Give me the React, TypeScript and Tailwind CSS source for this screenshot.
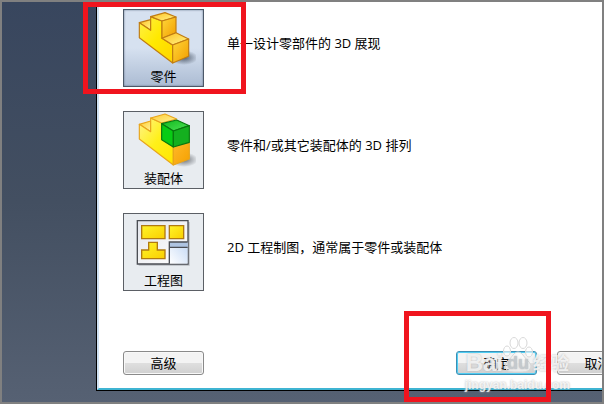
import type { ReactNode } from "react";
import clsx from "clsx";

function PartIcon() {
  return (
    <svg viewBox="156 33 192 168" className="h-14 w-16" aria-hidden="true">
      <defs>
        <linearGradient id="partFront" x1="0" y1="0" x2="1" y2="1">
          <stop offset="0" stopColor="#fff04a" />
          <stop offset="0.5" stopColor="#ffe900" />
          <stop offset="1" stopColor="#ffd400" />
        </linearGradient>
        <linearGradient id="partTop" x1="0" y1="0" x2="1" y2="1">
          <stop offset="0" stopColor="#ffbf1c" />
          <stop offset="1" stopColor="#fff58c" />
        </linearGradient>
        <linearGradient id="partSide" x1="0" y1="0" x2="1" y2="1">
          <stop offset="0" stopColor="#ffd83a" />
          <stop offset="1" stopColor="#f29d00" />
        </linearGradient>
        <radialGradient id="partShadow">
          <stop offset="0" stopColor="#3f4a5a" stopOpacity="0.85" />
          <stop offset="1" stopColor="#3f4a5a" stopOpacity="0" />
        </radialGradient>
      </defs>
      <ellipse cx="312" cy="176" rx="42" ry="22" fill="url(#partShadow)" />
      <g stroke="#c07c12" strokeWidth="3.5" strokeLinejoin="round">
        <path d="M178 71 212 62V94Z" fill="url(#partTop)" />
        <path
          d="M178 71 212 94V53L246 66V118L278 138V192L178 116Z"
          fill="url(#partFront)"
        />
        <path d="M212 53 255 41 288 54 246 66Z" fill="url(#partTop)" />
        <path d="M246 66 288 54V101L246 118Z" fill="url(#partSide)" />
        <path d="M246 118 288 101 326 120 278 138Z" fill="url(#partTop)" />
        <path d="M278 138 326 120V172L278 192Z" fill="url(#partSide)" />
      </g>
    </svg>
  );
}

function AssemblyIcon() {
  return (
    <svg viewBox="66 39 192 168" className="h-14 w-16" aria-hidden="true">
      <defs>
        <linearGradient id="asmFront" x1="0" y1="0" x2="1" y2="1">
          <stop offset="0" stopColor="#fff38a" />
          <stop offset="0.5" stopColor="#fff01a" />
          <stop offset="1" stopColor="#ffe500" />
        </linearGradient>
        <linearGradient id="asmTop" x1="0" y1="0" x2="1" y2="1">
          <stop offset="0" stopColor="#ffcc30" />
          <stop offset="1" stopColor="#fff39a" />
        </linearGradient>
        <linearGradient id="asmSide" x1="0" y1="0" x2="1" y2="1">
          <stop offset="0" stopColor="#ffb92a" />
          <stop offset="1" stopColor="#f5a000" />
        </linearGradient>
        <linearGradient id="asmGreen" x1="0" y1="0" x2="1" y2="1">
          <stop offset="0" stopColor="#0fb81c" />
          <stop offset="1" stopColor="#4fe257" />
        </linearGradient>
        <radialGradient id="asmShadow">
          <stop offset="0" stopColor="#55595f" stopOpacity="0.85" />
          <stop offset="1" stopColor="#55595f" stopOpacity="0" />
        </radialGradient>
      </defs>
      <ellipse cx="222" cy="182" rx="42" ry="22" fill="url(#asmShadow)" />
      <g stroke="#e8a51c" strokeWidth="3.5" strokeLinejoin="round">
        <path d="M88 76 122 66V98Z" fill="url(#asmTop)" />
        <path
          d="M88 76 122 98V57L155 72V120L190 144V198L88 120Z"
          fill="url(#asmFront)"
        />
        <path d="M122 57 165 45 200 60 155 72Z" fill="url(#asmTop)" />
        <path d="M190 144 238 130V180L190 198Z" fill="url(#asmSide)" />
      </g>
      <g stroke="#08780f" strokeWidth="3.5" strokeLinejoin="round">
        <path d="M155 74 200 63 238 80 190 96Z" fill="url(#asmGreen)" />
        <path d="M155 74 190 96V144L155 122Z" fill="#08cc14" />
        <path d="M190 96 238 80V130L190 144Z" fill="#14b01f" />
      </g>
    </svg>
  );
}

function DrawingIcon() {
  return (
    <svg viewBox="66 30 192 168" className="h-14 w-16" aria-hidden="true">
      <defs>
        <linearGradient id="sheet" x1="0" y1="0" x2="1" y2="1">
          <stop offset="0" stopColor="#e4e6ec" />
          <stop offset="1" stopColor="#ffffff" />
        </linearGradient>
        <linearGradient id="view" x1="0" y1="0" x2="1" y2="1">
          <stop offset="0" stopColor="#fff42a" />
          <stop offset="1" stopColor="#f9cf00" />
        </linearGradient>
        <linearGradient id="titleBlock" x1="0" y1="1" x2="1" y2="0">
          <stop offset="0" stopColor="#ffffff" />
          <stop offset="1" stopColor="#c3d8f5" />
        </linearGradient>
      </defs>
      <path d="M86 54H239V185H86Z" fill="#b9bcc2" />
      <path d="M82 50H234V180H82Z" fill="url(#sheet)" stroke="#4b4e54" strokeWidth="4" />
      <path d="M178 114H233V179H178Z" fill="url(#titleBlock)" />
      <path d="M178 114H233V130H178Z" fill="#aec4e2" />
      <path d="M178 179V114H233M178 130H233" fill="none" stroke="#4b4e54" strokeWidth="4" />
      <g fill="url(#view)" stroke="#b07a12" strokeWidth="4">
        <path d="M95 65H165V104H95Z" />
        <path d="M178 65H221V104H178Z" />
        <path d="M116 115H142V138H165V164H95V138H116Z" />
      </g>
    </svg>
  );
}

const templates: {
  label: string;
  description: string;
  icon: ReactNode;
  selected?: boolean;
}[] = [
  {
    label: "零件",
    description: "单一设计零部件的 3D 展现",
    icon: <PartIcon />,
    selected: true,
  },
  {
    label: "装配体",
    description: "零件和/或其它装配体的 3D 排列",
    icon: <AssemblyIcon />,
  },
  {
    label: "工程图",
    description: "2D 工程制图，通常属于零件或装配体",
    icon: <DrawingIcon />,
  },
];

function DialogButton({
  children,
  primary,
}: {
  children: ReactNode;
  primary?: boolean;
}) {
  return (
    <button
      type="button"
      className={clsx(
        "h-6 w-[81px] shrink-0 rounded-[3px] border bg-linear-to-b from-[#f3f3f3] from-50% via-[#dfdfdf] via-50% to-[#d0d0d0] leading-5",
        primary
          ? "border-[#3c8fb4] shadow-[inset_0_0_0_1px_#4fcdf3]"
          : "border-[#8a8a8a] shadow-[inset_0_0_0_1px_#f8f8f8]"
      )}
    >
      {children}
    </button>
  );
}

function Watermark() {
  return (
    <div className="pointer-events-none absolute right-8 bottom-[9px] flex flex-col items-center font-bold text-white/75 [text-shadow:0_0_2px_#b4b4b4]">
      <div className="flex items-end pb-1 text-[24px] leading-5">
        <span className="font-['Liberation_Sans']">Bai</span>
        <span className="relative flex w-[30px] justify-center">
          <svg
            viewBox="0 0 30 36"
            className="absolute bottom-0 left-0 h-9 w-[30px]"
            fill="#ffffff"
            fillOpacity="0.6"
            stroke="#d8d8d8"
            aria-hidden="true"
          >
            <ellipse cx="4" cy="14" rx="3.5" ry="5" />
            <ellipse cx="11" cy="6" rx="4" ry="5.5" />
            <ellipse cx="20" cy="6" rx="4" ry="5.5" />
            <ellipse cx="26" cy="15" rx="3.5" ry="5" />
            <path d="M15 15c-4 0-6 5-9 8s-5 5-3 9c2 3 6 3 12 3s10 0 12-3c2-4 0-6-3-9s-5-8-9-8Z" />
          </svg>
          <span className="relative font-['Liberation_Sans'] text-[18px] leading-5 text-[#c4c9cd]">
            du
          </span>
        </span>
        <span className="text-[18px]">经验</span>
      </div>
      <span className="font-['Liberation_Sans'] text-[12px] leading-4">
        jingyan.baidu.com
      </span>
    </div>
  );
}

export default function App() {
  return (
    <main className="relative flex min-h-screen overflow-hidden border-2 border-[#808080] bg-linear-to-b from-[#38465e] via-[#434f61] to-[#566173] pb-[11px] pl-[94px] font-['Open_Sans','Noto_Sans_CJK_SC',sans-serif] text-[13px] text-black">
      <section className="min-w-0 flex-1 border-b border-l border-black">
        <div className="flex h-full flex-col border-b-2 border-l-2 border-b-[#3fb4d2] border-l-[#cfe1f2] bg-white pt-[7px] pb-[13px] pl-6">
          <ul className="flex flex-col gap-6">
            {templates.map((template) => (
              <li key={template.label} className="flex gap-[23px]">
                <button
                  type="button"
                  aria-pressed={!!template.selected}
                  className={clsx(
                    "flex h-[78px] w-[81px] shrink-0 flex-col items-center border",
                    template.selected
                      ? "border-[#4c5868] bg-linear-to-b from-[#d6e1f0] from-50% to-[#acbcd3] shadow-[inset_0_0_2px_#5d6b80]"
                      : "border-[#5b5f65] bg-[#e8ecf0]"
                  )}
                >
                  {template.icon}
                  <span className="leading-5">{template.label}</span>
                </button>
                <p className="pt-6 leading-5">{template.description}</p>
              </li>
            ))}
          </ul>
          <div className="mt-auto flex justify-between">
            <DialogButton>高级</DialogButton>
            <div className="-mr-9 flex gap-5">
              <DialogButton primary>确定</DialogButton>
              <DialogButton>取消</DialogButton>
            </div>
          </div>
        </div>
      </section>

      <Watermark />
      <div className="pointer-events-none absolute top-0 left-[81px] h-[92px] w-[163px] border-5 border-[#f0141e]" />
      <div className="pointer-events-none absolute right-[51px] bottom-0 h-[91px] w-[147px] border-5 border-[#f0141e]" />
    </main>
  );
}
